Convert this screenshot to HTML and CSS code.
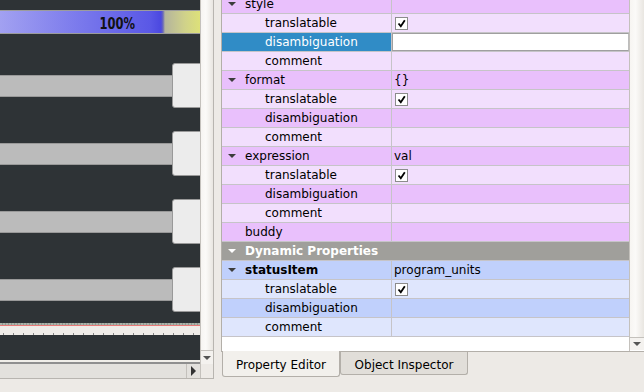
FILE: index.html
```html
<!DOCTYPE html>
<html lang="en">
<head>
    <meta charset="UTF-8">
    <title>Designer</title>
    <link rel="stylesheet" href="styles.css">
</head>
<body>
<div class="window">
    <div class="left">
        <div class="view">
            <div class="canvas">
                <div class="progress"><span>100%</span></div>
                <div class="sliders">
                    <div class="slider"><div class="groove"></div><div class="handle"></div></div>
                    <div class="slider"><div class="groove"></div><div class="handle"></div></div>
                    <div class="slider"><div class="groove"></div><div class="handle"></div></div>
                    <div class="slider"><div class="groove"></div><div class="handle"></div></div>
                </div>
                <div class="ruler"></div>
                <div class="strip"></div>
            </div>
            <div class="vscroll">
                <div class="thumb"></div>
                <div class="btn-down"><span class="tri-down"></span></div>
            </div>
        </div>
        <div class="hbar">
            <div class="hscroll">
                <div class="htrack"></div>
                <div class="btn-right"><span class="tri-right"></span></div>
            </div>
            <div class="corner"></div>
        </div>
    </div>

    <div class="right">
        <div class="frame">
            <div class="tree">
                <div class="rows">
                    <div class="row purple"><div class="name"><span class="arrow"></span>style</div><div class="value"></div></div>
                    <div class="row lilac"><div class="name sub">translatable</div><div class="value"><span class="check"><svg width="9" height="9" viewBox="0 0 9 9"><path d="M1.5 4.5 L3.8 7.2 L7.8 1.2" fill="none" stroke="#000" stroke-width="1.8"/></svg></span></div></div>
                    <div class="row lilac selected"><div class="name sub">disambiguation</div><div class="value"><div class="editor"></div></div></div>
                    <div class="row lilac"><div class="name sub">comment</div><div class="value"></div></div>
                    <div class="row purple"><div class="name"><span class="arrow"></span>format</div><div class="value">{}</div></div>
                    <div class="row lilac"><div class="name sub">translatable</div><div class="value"><span class="check"><svg width="9" height="9" viewBox="0 0 9 9"><path d="M1.5 4.5 L3.8 7.2 L7.8 1.2" fill="none" stroke="#000" stroke-width="1.8"/></svg></span></div></div>
                    <div class="row purple"><div class="name sub">disambiguation</div><div class="value"></div></div>
                    <div class="row lilac"><div class="name sub">comment</div><div class="value"></div></div>
                    <div class="row purple"><div class="name"><span class="arrow"></span>expression</div><div class="value">val</div></div>
                    <div class="row lilac"><div class="name sub">translatable</div><div class="value"><span class="check"><svg width="9" height="9" viewBox="0 0 9 9"><path d="M1.5 4.5 L3.8 7.2 L7.8 1.2" fill="none" stroke="#000" stroke-width="1.8"/></svg></span></div></div>
                    <div class="row purple"><div class="name sub">disambiguation</div><div class="value"></div></div>
                    <div class="row lilac"><div class="name sub">comment</div><div class="value"></div></div>
                    <div class="row purple"><div class="name top">buddy</div><div class="value"></div></div>
                    <div class="row group"><div class="name"><span class="arrow white"></span>Dynamic Properties</div></div>
                    <div class="row blue"><div class="name bold"><span class="arrow"></span>statusItem</div><div class="value">program_units</div></div>
                    <div class="row pale"><div class="name sub">translatable</div><div class="value"><span class="check"><svg width="9" height="9" viewBox="0 0 9 9"><path d="M1.5 4.5 L3.8 7.2 L7.8 1.2" fill="none" stroke="#000" stroke-width="1.8"/></svg></span></div></div>
                    <div class="row blue"><div class="name sub">disambiguation</div><div class="value"></div></div>
                    <div class="row pale"><div class="name sub">comment</div><div class="value"></div></div>
                </div>
            </div>
            <div class="vscroll2">
                <div class="thumb"></div>
                <div class="btn-down2"><span class="tri-down"></span></div>
            </div>
        </div>
        <div class="tabs">
            <div class="tab active">Property Editor</div>
            <div class="tab">Object Inspector</div>
        </div>
    </div>
</div>
</body>
</html>
```

FILE: styles.css
```css
body{
    margin:0;
    padding:0;
    background:#edeae6;
    font-family:"DejaVu Sans", sans-serif;
    font-size:12px;
    color:#000;
}
.window{
    width:644px;
    height:392px;
    display:flex;
    overflow:hidden;
}

/* left: form preview */
.left{
    width:214px;
    display:flex;
    flex-direction:column;
}
.view{
    display:flex;
    height:364px;
}
.canvas{
    width:200px;
    height:364px;
    background:#2e3336;
    overflow:hidden;
    display:flex;
    flex-direction:column;
    padding-top:10px;
    box-sizing:border-box;
}
.progress{
    width:234px;
    height:22px;
    flex-shrink:0;
    border-top:1px solid #9c9c9c;
    border-bottom:1px solid #9c9c9c;
    background:linear-gradient(to right,#a2a1f1 0,#7a79ec 80px,#5a58e6 150px,#4b48e0 161px,#6b6ab6 163px,#b4b49c 165px,#d0d28a 185px,#dde179 200px,#dde179 234px);
    display:flex;
    align-items:center;
    justify-content:center;
}
.progress span{
    display:inline-block;
    font-family:"DejaVu Sans Condensed","DejaVu Sans",sans-serif;
    font-weight:bold;
    font-size:16px;
    color:#111;
    transform:scaleX(0.8);
    margin-top:2px;
}
.sliders{
    margin-top:29px;
    display:flex;
    flex-direction:column;
    gap:23px;
}
.slider{
    height:45px;
    display:flex;
    align-items:center;
}
.groove{
    width:172px;
    height:20px;
    background:#bbbbbb;
    border-top:1px solid #999;
    border-bottom:1px solid #999;
    flex-shrink:0;
}
.handle{
    width:32px;
    height:43px;
    flex-shrink:0;
    background:#ececec;
    border:1px solid #999;
    border-radius:3px;
}
.ruler{
    margin-top:11px;
    height:12px;
    flex-shrink:0;
    background:
        repeating-linear-gradient(to right,transparent 0,transparent 3px,#858585 3px,#858585 4px,transparent 4px,transparent 10px) left 10px / 100% 2px no-repeat,
        linear-gradient(#e97a78,#e97a78) left 2px / 100% 1px no-repeat,
        repeating-linear-gradient(to right,#a9b2a9 0,#a9b2a9 2px,#8e968e 2px,#8e968e 3px) left top / 100% 2px no-repeat,
        #efece8;
}
.strip{
    margin-top:25px;
    height:2px;
    flex-shrink:0;
    background:#f0eee9;
    border-bottom:2px solid #8f8f8f;
}

.vscroll{
    width:14px;
    height:364px;
    display:flex;
    flex-direction:column;
    border-left:1px solid #c4c1bc;
    border-right:1px solid #b8b5b0;
    box-sizing:border-box;
}
.vscroll .thumb,.vscroll2 .thumb{
    flex:1;
    background:linear-gradient(to right,#f7f5f2,#fbfaf8 40%,#e9e6e1);
}
.btn-down{
    height:13px;
    border-top:1px solid #c4c1bc;
    background:#f4f2ef;
    display:flex;
    align-items:center;
    justify-content:center;
}
.tri-down{
    width:0;height:0;
    border-left:4px solid transparent;
    border-right:4px solid transparent;
    border-top:4px solid #555;
}
.hbar{
    display:flex;
    height:14px;
    border-bottom:1px solid #b8b5b0;
}
.hscroll{
    width:200px;
    display:flex;
    background:#e3e1dd;
}
.htrack{
    flex:1;
}
.btn-right{
    width:13px;
    border-left:1px solid #c4c1bc;
    display:flex;
    align-items:center;
    justify-content:center;
}
.tri-right{
    width:0;height:0;
    border-top:5px solid transparent;
    border-bottom:5px solid transparent;
    border-left:5px solid #333;
}
.corner{
    width:14px;
    border-left:1px solid #c4c1bc;
    border-right:1px solid #b8b5b0;
    box-sizing:border-box;
    background:#edeae6;
}

/* right: property editor */
.right{
    margin-left:7px;
    flex:1;
    display:flex;
    flex-direction:column;
}
.frame{
    height:352px;
    display:flex;
    border-left:1px solid #b3afa9;
    border-bottom:1px solid #b3afa9;
    box-sizing:border-box;
    background:#fff;
}
.tree{
    flex:1;
    overflow:hidden;
}
.rows{
    margin-top:-5px;
}
.row{
    display:flex;
    height:18px;
    line-height:18px;
    border-bottom:1px solid #c6c4c8;
    white-space:nowrap;
}
.name{
    width:170px;
    flex-shrink:0;
    border-right:1px solid #c6c4c8;
    padding-left:23px;
    box-sizing:border-box;
    position:relative;
}
.name.sub{
    padding-left:43px;
}
.value{
    flex:1;
    padding-left:2px;
    display:flex;
    align-items:center;
}
.purple{ background:#e9c0fc; }
.lilac{ background:#f2dffd; }
.blue{ background:#c0d0fc; }
.pale{ background:#dfe6fd; }
.group{
    background:#a09f9b;
    color:#fff;
    font-weight:bold;
}
.group .name{
    width:auto;
    border-right:none;
}
.bold{ font-weight:bold; }
.selected .name{
    background:#308cc6;
    color:#fff;
}
.selected .value{
    padding-left:0;
}
.editor{
    width:100%;
    height:16px;
    background:#fff;
    border:1px solid #9f9f9f;
    border-right-color:#bdbdbd;
    box-sizing:content-box;
}
.arrow{
    position:absolute;
    left:6px;
    top:7px;
    width:0;height:0;
    border-left:4px solid transparent;
    border-right:4px solid transparent;
    border-top:4px solid #3c3c3c;
}
.arrow.white{
    border-top-color:#fff;
}
.check{
    width:11px;
    height:11px;
    margin-left:1px;
    background:#fff;
    border:1px solid #8c8c8c;
    display:flex;
    align-items:center;
    justify-content:center;
}

.vscroll2{
    width:15px;
    display:flex;
    flex-direction:column;
    border-left:1px solid #c4c1bc;
    box-sizing:border-box;
}
.btn-down2{
    height:12px;
    margin-bottom:1px;
    border-top:1px solid #c4c1bc;
    background:#f4f2ef;
    display:flex;
    align-items:center;
    justify-content:center;
}

.tabs{
    display:flex;
    align-items:flex-start;
    padding-left:1px;
}
.tab{
    width:128px;
    box-sizing:border-box;
    text-align:center;
    height:23px;
    line-height:22px;
    padding-top:2px;
    background:#e1ded9;
    border:1px solid #b3afa9;
    border-top:none;
    border-radius:0 0 3px 3px;
}
.tab.active{
    width:118px;
    height:26px;
    line-height:24px;
    background:#f2f0ec;
    margin-top:-1px;
}
```
